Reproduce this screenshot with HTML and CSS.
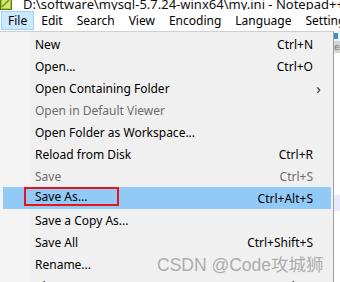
FILE: index.html
```html
<!DOCTYPE html>
<html lang="en">
<head>
    <meta charset="UTF-8">
    <title>my.ini - Notepad++</title>
    <link rel="stylesheet" href="styles.css">
</head>
<body>
<div class="window">
    <div class="titlebar">
        <svg class="app-icon" width="12" height="12" viewBox="0 0 12 12">
            <rect x="0.5" y="0.5" width="11" height="11" fill="#9ccc3c" stroke="#5a7a1a"/>
            <rect x="2" y="2" width="8" height="8" fill="#d8e86a"/>
            <path d="M2 9 L9 2" stroke="#6b8e23" stroke-width="1.5"/>
        </svg>
        <span class="title">D:\software\mysql-5.7.24-winx64\my.ini - Notepad++</span>
    </div>

    <div class="menubar">
        <span class="menu-item active">File</span>
        <span class="menu-item">Edit</span>
        <span class="menu-item">Search</span>
        <span class="menu-item">View</span>
        <span class="menu-item">Encoding</span>
        <span class="menu-item">Language</span>
        <span class="menu-item">Settings</span>
    </div>

    <div class="workarea">
        <div class="dropdown">
            <div class="row"><span class="label">New</span><span class="key">Ctrl+N</span></div>
            <div class="row"><span class="label">Open...</span><span class="key">Ctrl+O</span></div>
            <div class="row"><span class="label">Open Containing Folder</span><span class="arrow">&#x203A;</span></div>
            <div class="row disabled"><span class="label">Open in Default Viewer</span></div>
            <div class="row"><span class="label">Open Folder as Workspace...</span></div>
            <div class="row"><span class="label">Reload from Disk</span><span class="key">Ctrl+R</span></div>
            <div class="row disabled"><span class="label">Save</span><span class="key">Ctrl+S</span></div>
            <div class="row selected"><span class="label boxed">Save As...</span><span class="key">Ctrl+Alt+S</span></div>
            <div class="row"><span class="label">Save a Copy As...</span></div>
            <div class="row"><span class="label">Save All</span><span class="key">Ctrl+Shift+S</span></div>
            <div class="row"><span class="label">Rename...</span></div>
            <div class="row"><span class="label">Close</span><span class="key">Ctrl+W</span></div>
        </div>
        <div class="editor">
            <div class="toolbar"><span class="tool-icon"></span></div>
            <div class="tabs">er</div>
            <div class="text-area">
                <div class="line"></div>
                <div class="line"></div>
                <div class="line current"></div>
                <div class="line"></div>
            </div>
        </div>
    </div>

    <div class="watermark">CSDN @Code攻城狮</div>
</div>
</body>
</html>
```

FILE: styles.css
```css
* {
    margin: 0;
    padding: 0;
    box-sizing: border-box;
}

body {
    width: 340px;
    height: 282px;
    overflow: hidden;
    background-color: #ffffff;
    font-family: "Noto Sans", "Noto Sans CJK SC", sans-serif;
    font-size: 12px;
    color: #000;
}

.window {
    position: relative;
    width: 340px;
    height: 282px;
    overflow: hidden;
}

.titlebar {
    height: 10px;
    overflow: hidden;
    display: flex;
    align-items: flex-end;
    background-color: #fff;
}

.app-icon {
    flex: none;
    margin-bottom: 0;
}

.title {
    margin-left: 11px;
    font-size: 13px;
    line-height: 14px;
    margin-bottom: -1px;
    white-space: nowrap;
    color: #111;
}

.menubar {
    height: 21px;
    display: flex;
    align-items: center;
    padding-left: 1px;
    background-color: #fff;
    white-space: nowrap;
}

.menu-item {
    height: 19px;
    line-height: 17px;
    padding: 0 6px;
    border: 1px solid transparent;
}

.menu-item.active {
    background-color: #cce8ff;
    border-color: #99d1ff;
}

.workarea {
    display: flex;
    height: 251px;
}

.dropdown {
    width: 334px;
    flex: none;
    background: linear-gradient(to right, #f3f3f3 0, #f3f3f3 31px, #f0f0f0 31px);
    border-top: 1px solid #d0d0d0;
    border-right: 1px solid #a0a0a0;
    padding: 1px 2px 0 3px;
}

.row {
    height: 22px;
    display: flex;
    align-items: center;
    padding-left: 32px;
    padding-right: 18px;
    white-space: nowrap;
}

.row .label {
    flex: 1;
}

.row.disabled {
    color: #6d6d6d;
}

.row.selected {
    background-color: #91c9f7;
}

.boxed {
    flex: none !important;
    margin-left: -11px;
    padding: 0 30px 0 9px;
    height: 19px;
    line-height: 15px;
    border: 2px solid #e8141b;
    margin-top: -3px;
}

.row.selected .key {
    margin-left: auto;
}

.arrow {
    margin-right: -8px;
    font-size: 15px;
    color: #333;
}

.editor {
    flex: 1;
    display: flex;
    flex-direction: column;
}

.toolbar {
    height: 10px;
    background-color: #f0f0f0;
}

.tool-icon {
    display: block;
    width: 4px;
    height: 6px;
    margin-top: 2px;
    background-color: #3d8fd0;
}

.tabs {
    height: 12px;
    background-color: #d4d4d4;
    color: #777;
    font-size: 9px;
    line-height: 12px;
    overflow: hidden;
}

.text-area {
    flex: 1;
    background-color: #fff;
    padding-top: 110px;
}

.line {
    height: 16px;
}

.line.current {
    background-color: #e8e8ff;
}

.watermark {
    position: absolute;
    left: 157px;
    top: 251px;
    font-family: "Liberation Sans", "Noto Sans CJK SC", sans-serif;
    font-size: 17.5px;
    color: rgba(140, 140, 140, 0.7);
    white-space: nowrap;
}
```
